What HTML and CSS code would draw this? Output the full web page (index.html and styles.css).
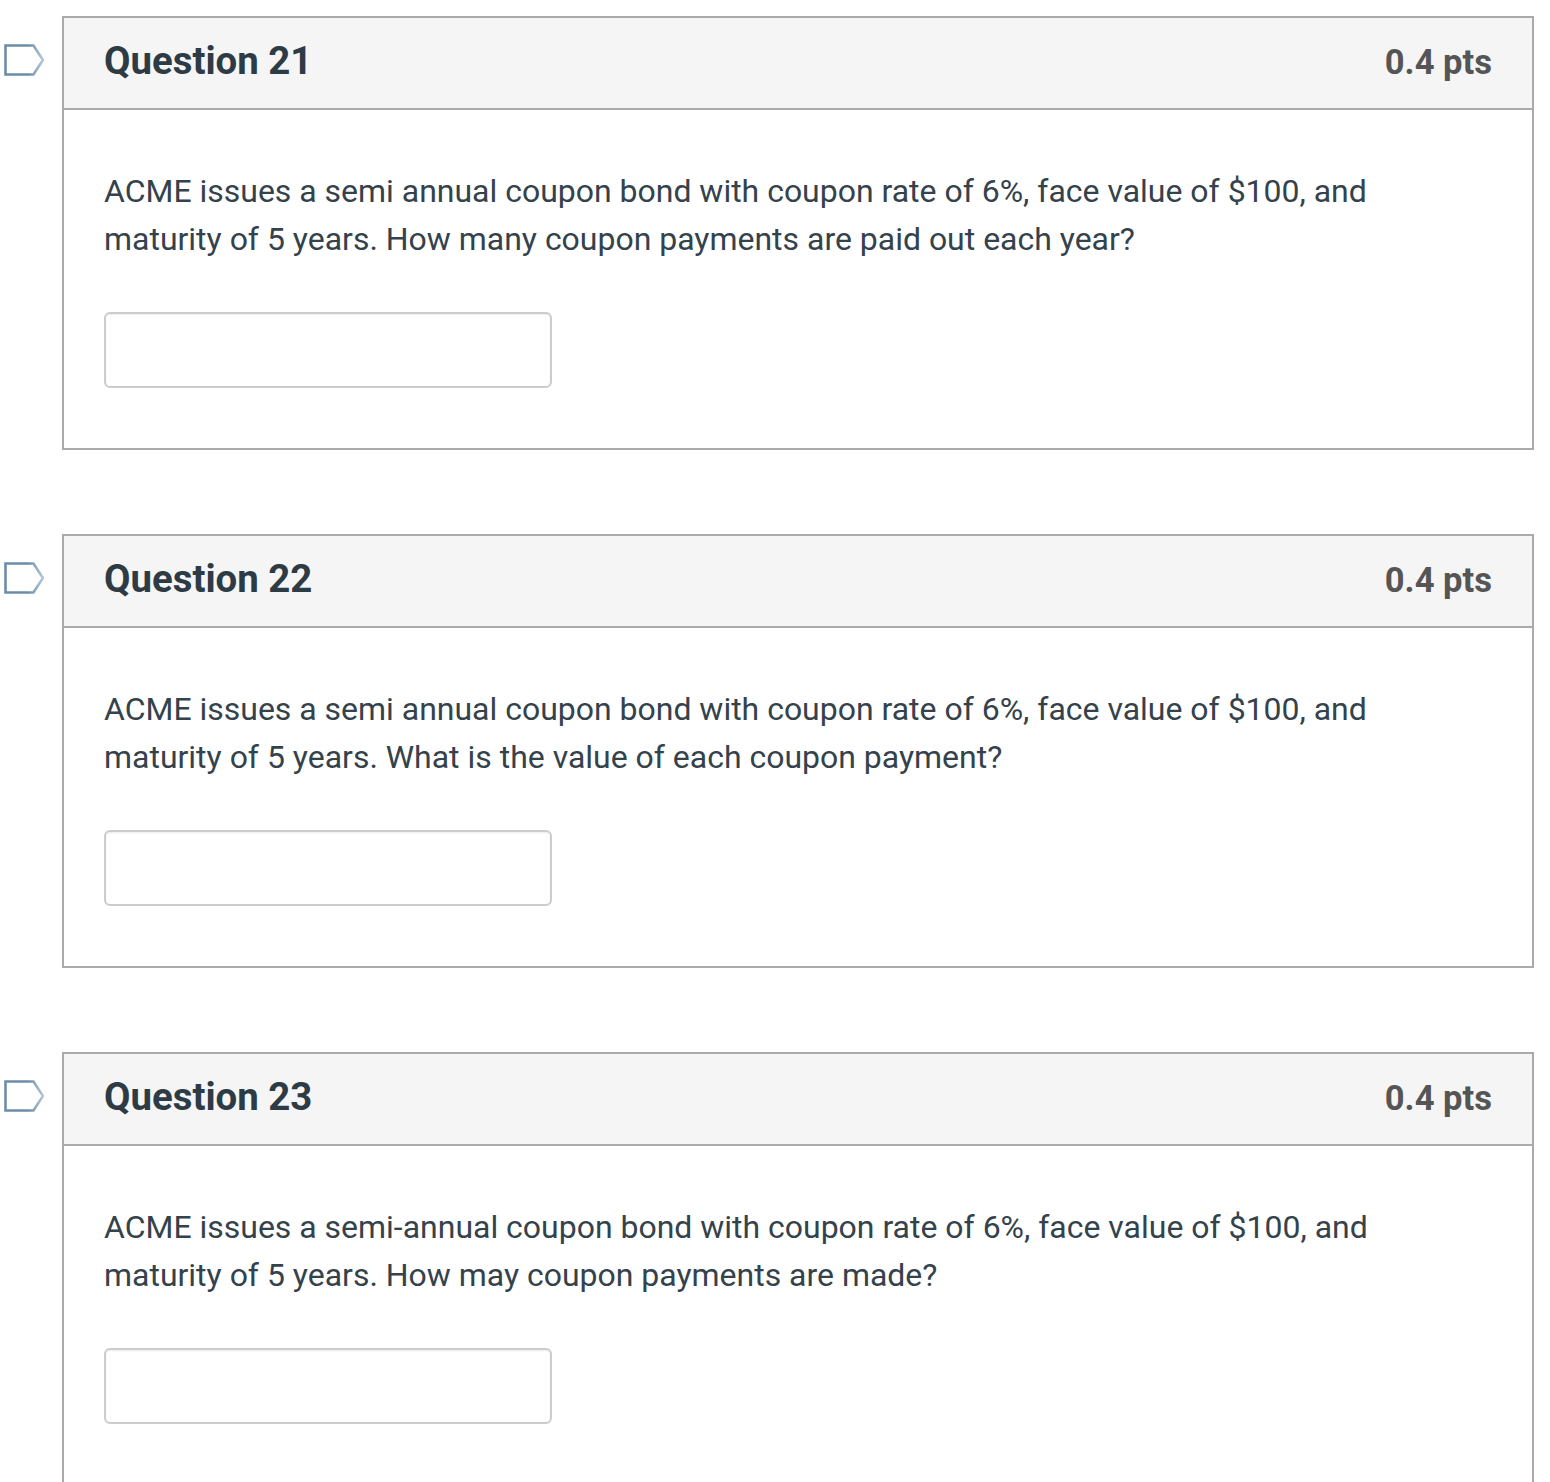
FILE: index.html
```html
<!DOCTYPE html>
<html lang="en">
<head>
    <meta charset="UTF-8">
    <meta name="viewport" content="width=device-width, initial-scale=1.0">
    <title>Quiz</title>
    <link rel="stylesheet" href="styles.css">
</head>
<body>
    <div class="question-row">
        <svg class="flag" viewBox="0 0 44 36" width="44" height="36">
            <defs>
                <linearGradient id="flag-edge" x1="0" y1="0" x2="1" y2="0">
                    <stop offset="0.6" stop-color="#6c8ca8"/>
                    <stop offset="1" stop-color="#b4c7d6"/>
                </linearGradient>
            </defs>
            <path d="M5.5 5.5H33.5L43 20L33.5 34.5H5.5Z"/>
        </svg>
        <div class="question">
            <div class="question-header">
                <h2>Question 21</h2>
                <span class="points">0.4 pts</span>
            </div>
            <div class="question-body">
                <p>ACME issues a semi annual coupon bond with coupon rate of 6%, face value of $100, and maturity of 5 years. How many coupon payments are paid out each year?</p>
                <input type="text" class="answer">
            </div>
        </div>
    </div>
    <div class="question-row">
        <svg class="flag" viewBox="0 0 44 36" width="44" height="36"><path d="M5.5 5.5H33.5L43 20L33.5 34.5H5.5Z"/></svg>
        <div class="question">
            <div class="question-header">
                <h2>Question 22</h2>
                <span class="points">0.4 pts</span>
            </div>
            <div class="question-body">
                <p>ACME issues a semi annual coupon bond with coupon rate of 6%, face value of $100, and maturity of 5 years. What is the value of each coupon payment?</p>
                <input type="text" class="answer">
            </div>
        </div>
    </div>
    <div class="question-row">
        <svg class="flag" viewBox="0 0 44 36" width="44" height="36"><path d="M5.5 5.5H33.5L43 20L33.5 34.5H5.5Z"/></svg>
        <div class="question">
            <div class="question-header">
                <h2>Question 23</h2>
                <span class="points">0.4 pts</span>
            </div>
            <div class="question-body">
                <p>ACME issues a semi-annual coupon bond with coupon rate of 6%, face value of $100, and maturity of 5 years. How may coupon payments are made?</p>
                <input type="text" class="answer">
            </div>
        </div>
    </div>
</body>
</html>
```

FILE: styles.css
```css
html, body {
    height: 1482px;
    overflow: hidden;
}

body {
    margin: 0;
    padding: 16px 16px 0 0;
    box-sizing: border-box;
    font-family: Roboto, "Liberation Sans", sans-serif;
    background-color: #fff;
    color: #2d3b45;
}

.question-row {
    display: flex;
    align-items: flex-start;
    margin-bottom: 84px;
}

.flag {
    flex: none;
    width: 44px;
    height: 36px;
    margin: 24px 18px 0 0;
}

.flag path {
    fill: #fff;
    stroke: url(#flag-edge);
    stroke-width: 2.6;
}

.question {
    flex: 1;
    border: 2px solid #aaa;
}

.question-header {
    display: flex;
    align-items: center;
    justify-content: space-between;
    box-sizing: border-box;
    height: 92px;
    padding: 0 40px 4px;
    background-color: #f5f5f5;
    border-bottom: 2px solid #aaa;
}

.question-header h2 {
    margin: 0 0 2px;
    font-size: 38.4px;
    font-weight: 700;
}

.points {
    margin-top: 2px;
    font-size: 34.6px;
    font-weight: 700;
    color: #555;
}

.question-body {
    padding: 57px 40px 60px;
}

.question-body p {
    margin: 0 0 49px;
    font-size: 31.97px;
    line-height: 48px;
    color: #34424c;
}

.answer {
    display: block;
    box-sizing: border-box;
    width: 448px;
    height: 76px;
    border: 2px solid #ccc;
    border-radius: 6px;
    background-color: #fff;
    box-shadow: inset 0 1px 2px rgba(0, 0, 0, 0.08);
}
```
